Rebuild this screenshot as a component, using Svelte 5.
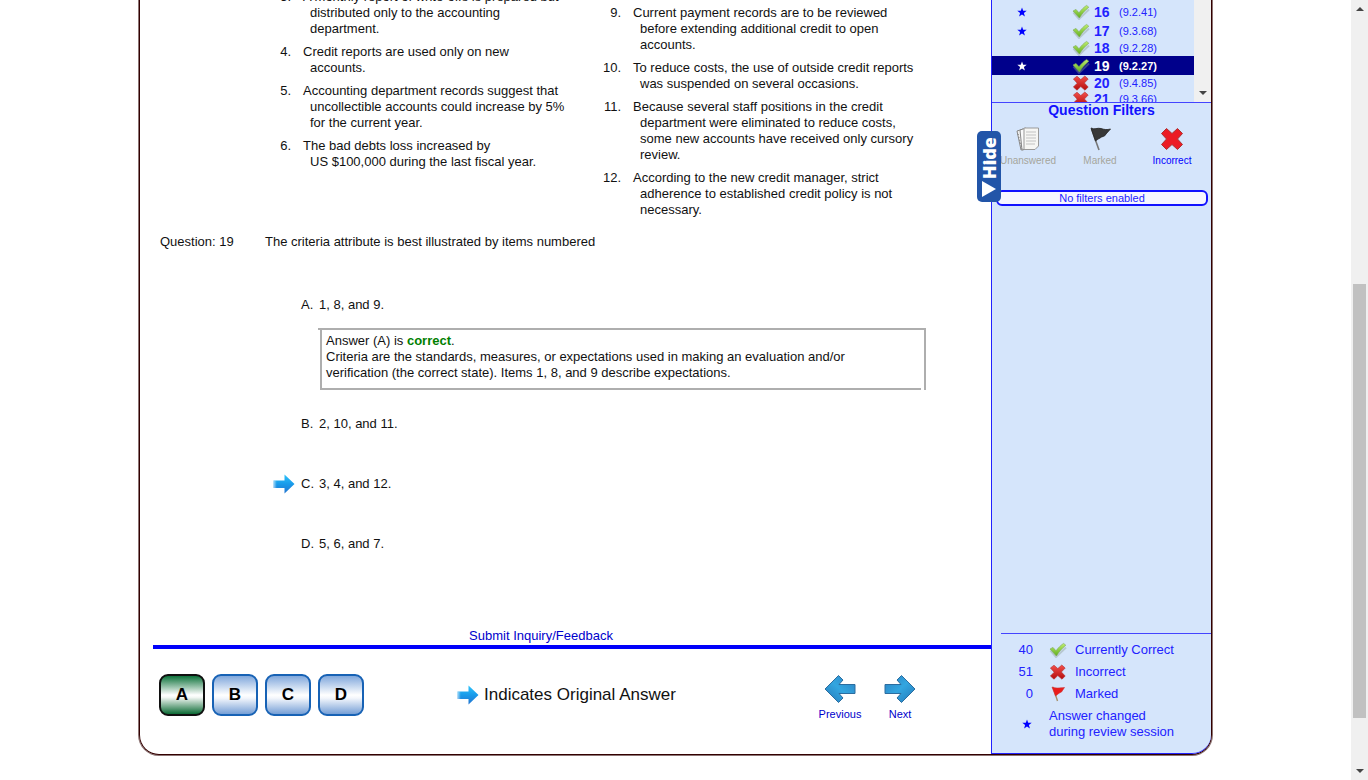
<script>
  const leftItems = [
    { n: 3, text: 'A monthly report of write-offs is prepared but\ndistributed only to the accounting\ndepartment.' },
    { n: 4, text: 'Credit reports are used only on new\naccounts.' },
    { n: 5, text: 'Accounting department records suggest that\nuncollectible accounts could increase by 5%\nfor the current year.' },
    { n: 6, text: 'The bad debts loss increased by\nUS $100,000 during the last fiscal year.' }
  ];
  const rightItems = [
    { n: 9, text: 'Current payment records are to be reviewed\nbefore extending additional credit to open\naccounts.' },
    { n: 10, text: 'To reduce costs, the use of outside credit reports\nwas suspended on several occasions.' },
    { n: 11, text: 'Because several staff positions in the credit\ndepartment were eliminated to reduce costs,\nsome new accounts have received only cursory\nreview.' },
    { n: 12, text: 'According to the new credit manager, strict\nadherence to established credit policy is not\nnecessary.' }
  ];
  const options = [
    { key: 'A', text: '1, 8, and 9.' },
    { key: 'B', text: '2, 10, and 11.' },
    { key: 'C', text: '3, 4, and 12.' },
    { key: 'D', text: '5, 6, and 7.' }
  ];
  const questions = [
    { n: 16, code: '9.2.41', ok: true, changed: true },
    { n: 17, code: '9.3.68', ok: true, changed: true },
    { n: 18, code: '9.2.28', ok: true, changed: false },
    { n: 19, code: '9.2.27', ok: true, changed: true },
    { n: 20, code: '9.4.85', ok: false, changed: false },
    { n: 21, code: '9.3.66', ok: false, changed: false }
  ];
  const current = 19;
  const original = 'C';
  const correct = 'A';
</script>

{#snippet check()}
  <svg class="mark" viewBox="0 0 18 16" aria-hidden="true">
    <defs>
      <linearGradient id="leaf" x1="0" y1="0" x2="0" y2="1">
        <stop offset="0" stop-color="#c0ee70" /><stop offset="1" stop-color="#5fae1c" />
      </linearGradient>
    </defs>
    <path d="M1.5 8.5 L7 15 L17 5.5" fill="none" stroke="#8a9a90" stroke-opacity=".4" stroke-width="2" />
    <path d="M1 7 L4 5.4 L7 8.8 C9 6 11.5 3.4 14.6 1.4 L16.8 3.2 C13 6.4 10 9.6 7.4 14 Z" fill="url(#leaf)" stroke="#7ba855" stroke-width=".6" stroke-linejoin="round" />
  </svg>
{/snippet}

{#snippet cross()}
  <svg class="mark" viewBox="0 0 18 16" aria-hidden="true">
    <defs>
      <linearGradient id="ruby" x1="0" y1="0" x2="0" y2="1">
        <stop offset="0" stop-color="#f4504c" /><stop offset="1" stop-color="#b40c0c" />
      </linearGradient>
    </defs>
    <path d="M1.4 4 L5 1.2 L8.8 4.6 L12.8 1 L16.2 4 L12.4 8 L16.2 12 L13 15.2 L8.8 11.6 L5 15.2 L1.4 12 L5.2 8.2 Z" fill="url(#ruby)" stroke="#b03030" stroke-width=".6" stroke-linejoin="round" />
  </svg>
{/snippet}

{#snippet star()}
  <svg class="star" viewBox="0 0 10 10" aria-hidden="true">
    <path d="M5 .4 L6.2 3.7 L9.7 3.8 L6.9 6 L7.9 9.4 L5 7.4 L2.1 9.4 L3.1 6 L.3 3.8 L3.8 3.7 Z" fill="currentColor" />
  </svg>
{/snippet}

{#snippet pointer()}
  <svg class="pointer" viewBox="0 0 22 20" aria-hidden="true">
    <defs>
      <linearGradient id="sky" x1="0" y1="0" x2="0" y2="1">
        <stop offset="0" stop-color="#2fc4fb" /><stop offset=".5" stop-color="#199bea" /><stop offset="1" stop-color="#2474cf" />
      </linearGradient>
      <linearGradient id="tail" x1="0" x2="1"><stop offset="0" stop-color="#fff" stop-opacity=".6" /><stop offset=".3" stop-color="#fff" stop-opacity="0" /></linearGradient>
    </defs>
    <path d="M.5 6.5 H11.5 V.5 L21.5 10 L11.5 19.5 V14 H.5 Z" fill="url(#sky)" />
    <path d="M.5 6.5 H11.5 V14 H.5 Z" fill="url(#tail)" />
  </svg>
{/snippet}

{#snippet navArrow()}
  <svg viewBox="0 0 32 30" aria-hidden="true">
    <defs>
      <linearGradient id="ocean" x1="0" y1="0" x2="1" y2="1">
        <stop offset="0" stop-color="#2b7fc0" /><stop offset=".5" stop-color="#33a6e0" /><stop offset="1" stop-color="#2377b8" />
      </linearGradient>
    </defs>
    <path d="M1 10.5 H17 L13 6 L17.5 1.5 L31 15 L17.5 28.5 L13 24 L17 19.5 H1 Z" fill="url(#ocean)" stroke="#2c6d9f" stroke-linejoin="round" />
  </svg>
{/snippet}

{#snippet questionList(items)}
  <ol class="facts">
    {#each items as item}
      <li><span class="num">{item.n}.</span><span class="fact">{item.text}</span></li>
    {/each}
  </ol>
{/snippet}

<div class="shell">
  <div class="page">
    <div class="frame">
      <main>
        <div class="stimulus">
          {@render questionList(leftItems)}
          {@render questionList(rightItems)}
        </div>
        <div class="question">
          <span>Question: 19</span>
          <span>The criteria attribute is best illustrated by items numbered</span>
        </div>
        <ul class="options">
          {#each options as option}
            <li>
              <div class="option">
                <span class="slot">{#if option.key === original}{@render pointer()}{/if}</span>
                <span>{option.key}.</span>
                <span>{option.text}</span>
              </div>
              {#if option.key === correct}
                <div class="explain">
                  Answer (A) is <b>correct</b>.<br />
                  Criteria are the standards, measures, or expectations used in making an evaluation and/or<br />
                  verification (the correct state). Items 1, 8, and 9 describe expectations.
                </div>
              {/if}
            </li>
          {/each}
        </ul>
        <div class="feedback"><a href="#feedback">Submit Inquiry/Feedback</a></div>
        <footer>
          <div class="choices">
            {#each options as option}
              <button class:right={option.key === correct}>{option.key}</button>
            {/each}
          </div>
          <div class="note">{@render pointer()}<span>Indicates Original Answer</span></div>
          <nav>
            <button class="prev">{@render navArrow()}<span>Previous</span></button>
            <button>{@render navArrow()}<span>Next</span></button>
          </nav>
        </footer>
      </main>

      <aside>
        <button class="hide"><span>Hide</span><svg viewBox="0 0 14 16" aria-hidden="true"><path d="M0 0 L14 8 L0 16 Z" fill="#fff" /></svg></button>
        <div class="list">
          <ul>
            {#each questions as q}
              <li class:changed={q.changed} class:current={q.n === current}>
                <span class="slot">{#if q.changed}{@render star()}{/if}</span>
                {#if q.ok}{@render check()}{:else}{@render cross()}{/if}
                <b>{q.n}</b>
                <span class="code">({q.code})</span>
              </li>
            {/each}
          </ul>
          <div class="track"><i class="down"></i></div>
        </div>
        <section class="filters">
          <h2>Question Filters</h2>
          <div class="kinds">
            <button class="off">
              <svg viewBox="0 0 26 26" aria-hidden="true">
                <path d="M2 5 L8 3 L12 23 L6 24 Z" fill="#eee" stroke="#888" />
                <path d="M5 4 L11 2 V23 L7 24 Z" fill="#fafafa" stroke="#888" />
                <path d="M9 2 H23.5 V20 L20 23.5 H9 Z" fill="#f6f6f4" stroke="#999" />
                <path d="M11 6 H21 M11 9 H21 M11 12 H21 M11 15 H21 M11 18 H20" stroke="#c2c2c2" />
                <path d="M3 8 L7 23" stroke="#777" stroke-dasharray="1 2" />
              </svg>
              <span>Unanswered</span>
            </button>
            <button class="off">
              <svg viewBox="0 0 26 26" aria-hidden="true">
                <path d="M4.5 3 L12 24" stroke="#777" stroke-width="1.6" />
                <path d="M4 2 C8 4 10 1.5 14 2.5 C17 3.6 20 4 23.5 3 L19 8 C18 11 15 10 13 12 C11 13 10 14 8.5 15 Z" fill="#383838" stroke="#222" stroke-width=".8" />
              </svg>
              <span>Marked</span>
            </button>
            <button>
              <svg viewBox="0 0 26 26" aria-hidden="true">
                <path d="M2.5 7.5 L7.5 2.5 L13 7.5 L18.5 2.5 L23.5 7.5 L18.5 13 L23.5 18.5 L18.5 23.5 L13 18.5 L7.5 23.5 L2.5 18.5 L7.5 13 Z" fill="#ec1c24" stroke="#a33" stroke-width="1" stroke-linejoin="round" />
              </svg>
              <span>Incorrect</span>
            </button>
          </div>
          <p class="status">No filters enabled</p>
        </section>
        <dl class="legend">
          <dt>40</dt><dd>{@render check()}Currently Correct</dd>
          <dt>51</dt><dd>{@render cross()}Incorrect</dd>
          <dt>0</dt>
          <dd>
            <svg class="mark" viewBox="0 0 18 16" aria-hidden="true">
              <path d="M4 1 L8.5 15" stroke="#a8916a" stroke-width="1.4" />
              <path d="M3 1 C7 2.5 10 2 15.5 1.5 L12.5 6 C10 7 9 8 6.5 10 Z" fill="#ea1c1c" stroke="#c33" stroke-width=".6" />
            </svg>Marked
          </dd>
          <dt>{@render star()}</dt><dd class="wide">Answer changed<br />during review session</dd>
        </dl>
      </aside>
    </div>
  </div>
  <div class="scroll"><i class="up"></i><div class="thumb"></div><i class="down"></i></div>
</div>

<style>
  :global(body) { margin: 0; background: #fff; }
  .shell {
    display: flex;
    height: 100vh;
    overflow: hidden;
    font: 13px/16px "Liberation Sans", Arial, sans-serif;
    color: #111;
  }
  ul, ol, dl, dd, p, h2 { margin: 0; padding: 0; list-style: none; }
  button { font: inherit; padding: 0; border: 0; background: none; cursor: pointer; }
  svg { display: block; flex: none; }
  .page { flex: 1; min-width: 0; }
  .frame {
    display: flex;
    max-width: 1071px;
    margin: 0 auto;
    border: 1px solid #300;
    border-top: 0;
    border-radius: 0 0 20px 20px;
    box-shadow: 0 0 0 1px #8c7474;
  }
  main { flex: 1; min-width: 0; display: flex; flex-direction: column; }

  .stimulus {
    display: grid;
    grid-template-columns: 330px 1fr;
    padding-left: 133px;
    margin-top: -11px;
  }
  .facts { display: flex; flex-direction: column; gap: 7px; }
  .facts + :global(.facts) { padding-top: 16px; }
  .facts li { display: grid; grid-template-columns: 18px 1fr; column-gap: 12px; }
  .num { text-align: right; }
  .fact { white-space: pre; padding-left: 7px; text-indent: -7px; }
  .question {
    display: grid;
    grid-template-columns: 105px 1fr;
    padding-left: 20px;
    margin-top: 16px;
  }
  .options { padding: 47px 65px 0 133px; }
  .options li { margin-bottom: 44px; }
  .options li:first-child { margin-bottom: 26px; }
  .option { display: grid; grid-template-columns: 28px 18px 1fr; align-items: center; }
  .option .slot { margin: -2px 0; }
  .pointer { width: 22px; height: 20px; }
  .explain {
    position: relative;
    margin: 15px 0 0 47px;
    padding: 3px 4px 7px;
    border: 2px solid #aeaeae;
    white-space: nowrap;
  }
  .explain::before {
    content: "";
    position: absolute;
    left: -4px;
    top: -2px;
    width: 2px;
    height: 2px;
    background: #aeaeae;
  }
  .explain::after {
    content: "";
    position: absolute;
    right: 0;
    bottom: -2px;
    width: 3px;
    height: 2px;
    background: #fff;
  }
  .explain b { color: #008000; }
  .feedback { margin-top: 32px; padding-right: 49px; text-align: center; }
  .feedback a { color: #00c; text-decoration: none; }
  footer {
    display: flex;
    align-items: flex-start;
    margin: 1px 0 0 13px;
    padding: 25px 61px 32px 6px;
    border-top: 4px solid #0000fa;
  }
  .choices { display: flex; gap: 7px; }
  .choices button {
    width: 46px;
    height: 42px;
    border: 2px solid #1762b5;
    border-radius: 9px;
    background: linear-gradient(#81a8dc, #fff 50%, #f4f7fc 58%, #769fd6);
    font-size: 17px;
    font-weight: bold;
    color: #000;
  }
  .choices .right {
    border-color: #101010;
    background: linear-gradient(#0f733c, #fff 50%, #f4f8f5 56%, #0c6b35);
  }
  .note {
    display: flex;
    align-items: center;
    gap: 5px;
    height: 42px;
    margin-left: 93px;
    font-size: 17px;
    white-space: nowrap;
  }
  nav { display: flex; margin-left: auto; }
  nav button { width: 60px; color: #00c; font-size: 11px; line-height: 16px; }
  nav svg { width: 32px; height: 30px; margin: 0 auto 2px; }
  nav span { display: block; }
  .prev :global(svg) { transform: scaleX(-1); }

  aside {
    position: relative;
    flex: none;
    width: 219px;
    display: flex;
    flex-direction: column;
    border: solid #22f;
    border-width: 0 0 1px 1px;
    border-radius: 0 0 19px 0;
    background: #d5e5fb;
    color: #22f;
  }
  .list {
    display: flex;
    height: 102px;
    overflow: hidden;
    border-bottom: 1px solid #44f;
  }
  .list ul { flex: 1; padding-top: 2px; }
  .list li {
    display: grid;
    grid-template-columns: 80px 22px 25px 1fr;
    align-items: center;
    height: 16px;
  }
  .list .changed { height: 19px; }
  .list b { font-size: 14px; line-height: 14px; }
  .list .current { background: #00008b; color: #fff; }
  .list .slot { padding-left: 25px; }
  .code { font-size: 11px; line-height: 14px; }
  .current .code { font-weight: bold; }
  .mark { width: 18px; height: 16px; }
  .star { width: 10px; height: 10px; color: #00f; }
  .current .star { color: #fff; }
  .track {
    width: 17px;
    display: flex;
    align-items: flex-end;
    justify-content: center;
    background: #f0f0f0;
    padding-bottom: 7px;
    box-sizing: border-box;
  }
  .down, .up { flex: none; border: 4px solid transparent; width: 0; height: 0; }
  .down { border-top-color: #444; border-bottom: 0; }
  .up { border-bottom-color: #444; border-top: 0; }

  h2 { font-size: 14px; line-height: 15px; text-align: center; color: #11f; }
  .kinds {
    display: grid;
    grid-template-columns: 1fr 1fr 1fr;
    margin-top: 8px;
    padding-right: 3px;
  }
  .kinds button { color: #00f; font-size: 10px; line-height: 12px; }
  .kinds .off { color: #a5a59c; }
  .kinds svg { width: 26px; height: 26px; margin: 0 auto 3px; }
  .status {
    margin: 23px 3px 0 4px;
    border: 2px solid #11f;
    border-radius: 6px;
    background: #f6f6ff;
    font-size: 11px;
    line-height: 12px;
    text-align: center;
  }
  .hide {
    position: absolute;
    left: -15px;
    top: 131px;
    display: flex;
    flex-direction: column;
    align-items: center;
    justify-content: space-between;
    width: 24px;
    height: 71px;
    padding: 6px 0 5px;
    border-radius: 5px;
    background: #2255a8;
    color: #fff;
    font: 800 18px/20px "Open Sans", sans-serif;
  }
  .hide span { writing-mode: vertical-rl; transform: rotate(180deg); }
  .hide svg { width: 14px; height: 16px; }
  .legend {
    display: grid;
    grid-template-columns: 32px 1fr;
    column-gap: 16px;
    row-gap: 6px;
    margin: auto 0 0 9px;
    padding: 8px 0 13px;
    border-top: 1px solid #44f;
  }
  dt { text-align: right; align-self: center; }
  dt .star { margin-left: 21px; }
  dd { display: flex; align-items: center; gap: 8px; }
  .wide { display: block; }

  .scroll {
    width: 17px;
    display: flex;
    flex-direction: column;
    align-items: center;
    background: #f0f0f0;
    padding: 7px 0;
    box-sizing: border-box;
  }
  .thumb { width: 13px; flex: 1; background: #c1c1c1; }
  .up { margin-bottom: 35vh; }
  .scroll .down { margin-top: 51px; }
</style>
